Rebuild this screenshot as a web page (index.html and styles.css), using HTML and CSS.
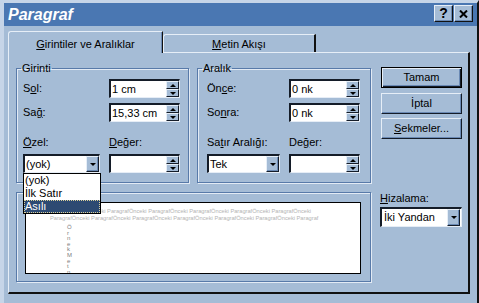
FILE: index.html
```html
<!DOCTYPE html>
<html lang="tr">
<head>
    <meta charset="UTF-8">
    <meta name="viewport" content="width=device-width, initial-scale=1.0">
    <title>Paragraf</title>
    <link rel="stylesheet" href="styles.css">
</head>
<body>

    <div class="window">
        <div class="titlebar">
            <span class="title">Paragraf</span>
            <div class="title-buttons">
                <span class="tbtn help">?</span>
                <span class="tbtn close">
                    <svg width="9" height="8" viewBox="0 0 9 8"><path d="M1 0.5l7 7M8 0.5l-7 7" stroke="#000" stroke-width="2"/></svg>
                </span>
            </div>
        </div>

        <div class="tabs">
            <div class="tab active"><u>G</u>irintiler ve Aralıklar</div>
            <div class="tab"><u>M</u>etin Akışı</div>
        </div>

        <div class="panel">
            <div class="main">
                <div class="groups">
                    <fieldset class="group girinti">
                        <legend>Girinti</legend>
                        <div class="grid">
                            <span class="lbl">S<u>o</u>l:</span>
                            <div class="spin"><span class="value">1 cm</span><span class="arrows"><span class="arrow up"></span><span class="arrow down"></span></span></div>
                            <span class="lbl">Sa<u>ğ</u>:</span>
                            <div class="spin"><span class="value">15,33 cm</span><span class="arrows"><span class="arrow up"></span><span class="arrow down"></span></span></div>
                            <span class="lbl bottom"><u>Ö</u>zel:</span>
                            <span class="lbl bottom"><u>D</u>eğer:</span>
                            <div class="combo open">
                                <span class="value">(yok)</span><span class="drop-btn"></span>
                                <ul class="list">
                                    <li>(yok)</li>
                                    <li>İlk Satır</li>
                                    <li class="selected">Asılı</li>
                                </ul>
                            </div>
                            <div class="spin"><span class="value"></span><span class="arrows"><span class="arrow up"></span><span class="arrow down"></span></span></div>
                        </div>
                    </fieldset>

                    <fieldset class="group aralik">
                        <legend>Aralık</legend>
                        <div class="grid">
                            <span class="lbl">Ön<u>c</u>e:</span>
                            <div class="spin"><span class="value">0 nk</span><span class="arrows"><span class="arrow up"></span><span class="arrow down"></span></span></div>
                            <span class="lbl">So<u>n</u>ra:</span>
                            <div class="spin"><span class="value">0 nk</span><span class="arrows"><span class="arrow up"></span><span class="arrow down"></span></span></div>
                            <span class="lbl bottom">Sa<u>t</u>ır Aralığı:</span>
                            <span class="lbl bottom">De<u>ğ</u>er:</span>
                            <div class="combo"><span class="value">Tek</span><span class="drop-btn"></span></div>
                            <div class="spin"><span class="value"></span><span class="arrows"><span class="arrow up"></span><span class="arrow down"></span></span></div>
                        </div>
                    </fieldset>
                </div>

                <!-- the "Önizleme" caption sits under the open list -->
                <div class="group preview">
                    <div class="preview-box">
                        <div class="pline first">ParagrafÖnceki ParagrafÖnceki ParagrafÖnceki ParagrafÖnceki ParagrafÖnceki ParagrafÖnceki</div>
                        <div class="pline">ParagrafÖnceki ParagrafÖnceki ParagrafÖnceki ParagrafÖnceki ParagrafÖnceki ParagrafÖnceki Paragraf</div>
                        <div class="sample">ÖrnekMetn</div>
                    </div>
                </div>
            </div>

            <div class="side">
                <div class="btn default">Tamam</div>
                <div class="btn">İptal</div>
                <div class="btn"><u>S</u>ekmeler...</div>
                <span class="side-lbl"><u>H</u>izalama:</span>
                <div class="combo wide"><span class="value">İki Yandan</span><span class="drop-btn"></span></div>
            </div>
        </div>
    </div>

</body>
</html>
```

FILE: styles.css
```css
* {
    margin: 0;
    padding: 0;
    box-sizing: border-box;
}

body {
    font-family: "Liberation Sans", Arial, sans-serif;
    font-size: 11px;
    color: #000;
    background: #a5bcd6;
}

u {
    text-decoration: underline;
    text-underline-offset: 1px;
}

.window {
    width: 479px;
    height: 303px;
    background: #a5bcd6;
    border-left: 4px solid #c6d5e8;
    border-top: 3px solid #c6d5e8;
    border-right: 2px solid #111;
    overflow: hidden;
}

/* title bar */
.titlebar {
    height: 23px;
    background: #4a77b2;
    display: flex;
    justify-content: space-between;
    align-items: flex-start;
    padding: 0 4px 0 4px;
}

.title {
    color: #fff;
    font-size: 16px;
    font-weight: bold;
    font-style: italic;
    line-height: 23px;
}

.title-buttons {
    display: flex;
    gap: 1px;
    margin-top: 2px;
}

.tbtn {
    width: 19px;
    height: 17px;
    background: #a5bcd6;
    border-top: 1px solid #e6eef7;
    border-left: 1px solid #e6eef7;
    border-right: 1px solid #111;
    border-bottom: 1px solid #111;
    box-shadow: inset -1px -1px 0 #6a89b4;
    display: flex;
    align-items: center;
    justify-content: center;
}

.help {
    font-size: 14px;
    font-weight: bold;
    line-height: 15px;
}

/* tabs */
.tabs {
    display: flex;
    align-items: flex-end;
    height: 26px;
    padding-left: 4px;
    position: relative;
    z-index: 1;
}

.tab {
    width: 153px;
    height: 18px;
    text-align: center;
    line-height: 15px;
    padding-top: 2px;
    border-top: 1px solid #e6eef7;
    border-left: 1px solid #e6eef7;
    border-right: 2px solid #111;
    border-top-left-radius: 3px;
    background: #a5bcd6;
}

.tab.active {
    width: 155px;
    height: 22px;
    margin-bottom: -1px;
    padding-top: 5px;
    border-right: 1px solid #111;
    box-shadow: inset -1px 0 0 #6a89b4;
}

/* tab page */
.panel {
    margin-left: 4px;
    width: 462px;
    height: 242px;
    border-top: 1px solid #e6eef7;
    border-left: 1px solid #e6eef7;
    border-right: 2px solid #111;
    border-bottom: 2px solid #111;
    padding: 9px 0 0 7px;
    display: flex;
}

.main {
    width: 355px;
}

.groups {
    display: flex;
    gap: 8px;
}

.group {
    border: 1px solid #587aa9;
    box-shadow: inset 1px 1px 0 #e2eaf4, 1px 1px 0 #e2eaf4;
    padding: 4px 0 9px 6px;
}

.group legend {
    margin-left: -2px;
    padding: 0 1px;
    line-height: 13px;
}

.girinti {
    width: 173px;
}

.aralik {
    width: 174px;
}

.grid {
    display: grid;
    grid-template-columns: 77px 71px;
    grid-template-rows: 19px 19px 22px 19px;
    column-gap: 9px;
    row-gap: 5px;
    align-items: center;
}

.aralik .grid {
    margin-left: 3px;
    grid-template-columns: 73px 71px;
}

.lbl {
    line-height: 13px;
    white-space: nowrap;
}

.lbl.bottom {
    align-self: end;
}

/* inputs */
.spin, .combo {
    display: flex;
    height: 19px;
    background: #fff;
    border-top: 2px solid #141c28;
    border-left: 2px solid #141c28;
    border-right: 1px solid #e6edf6;
    border-bottom: 1px solid #e6edf6;
}

.value {
    flex: 1;
    line-height: 16px;
    padding-left: 1px;
    white-space: nowrap;
}

.arrows {
    width: 13px;
    display: flex;
    flex-direction: column;
}

.arrow, .drop-btn {
    flex: 1;
    background: #a5bcd6;
    border-top: 1px solid #e6eef7;
    border-left: 1px solid #e6eef7;
    border-right: 1px solid #141c28;
    border-bottom: 1px solid #141c28;
    display: flex;
    align-items: center;
    justify-content: center;
}

.arrow::after, .drop-btn::after {
    content: "";
    border-left: 3px solid transparent;
    border-right: 3px solid transparent;
}

.arrow.up::after {
    border-bottom: 3px solid #000;
}

.arrow.down::after, .drop-btn::after {
    border-top: 3px solid #000;
}

.drop-btn {
    flex: none;
    width: 13px;
    box-shadow: inset -1px -1px 0 #6a89b4;
}

.combo {
    position: relative;
}

.combo .list {
    position: absolute;
    top: 17px;
    left: -2px;
    width: 78px;
    list-style: none;
    background: #fff;
    border: 1px solid #000;
    z-index: 2;
}

.list li {
    height: 13px;
    line-height: 13px;
    padding-left: 1px;
}

.list li.selected {
    background: #2d4a72;
    color: #fff;
    outline: 1px dotted #d9cf9a;
    outline-offset: -1px;
}

/* preview */
.preview {
    margin-top: 9px;
    padding: 9px 9px 7px 8px;
}

.preview-box {
    height: 72px;
    background: #fff;
    border: 1px solid #000;
    overflow: hidden;
    font-size: 5.7px;
    white-space: nowrap;
}

.pline {
    color: #b4b4b4;
    line-height: 6.5px;
    padding-left: 24px;
}

.pline.first {
    margin-top: 5px;
    padding-left: 40px;
}

.sample {
    width: 4px;
    margin: 4px 0 0 41px;
    white-space: normal;
    word-break: break-all;
    font-size: 6px;
    line-height: 5.6px;
    color: #7e7e7e;
}

/* buttons column */
.side {
    width: 82px;
    margin-left: 9px;
    padding-top: 5px;
    display: flex;
    flex-direction: column;
}

.btn {
    margin-left: 1px;
    height: 21px;
    line-height: 18px;
    text-align: center;
    border-top: 1px solid #e6eef7;
    border-left: 1px solid #e6eef7;
    border-right: 1px solid #141c28;
    border-bottom: 1px solid #141c28;
    box-shadow: inset -1px -1px 0 #6a89b4;
    margin-bottom: 4px;
}

.btn.default {
    border: 1px solid #000;
    box-shadow: inset 1px 1px 0 #e6eef7, inset -1px -1px 0 #141c28, inset -2px -2px 0 #6a89b4;
    margin-bottom: 5px;
}

.side-lbl {
    margin-top: 49px;
    line-height: 13px;
}

.combo.wide {
    margin-top: 2px;
    height: 20px;
}

.combo.wide .value {
    padding-left: 2px;
}

.combo.wide .drop-btn {
    margin-right: 1px;
}
```
